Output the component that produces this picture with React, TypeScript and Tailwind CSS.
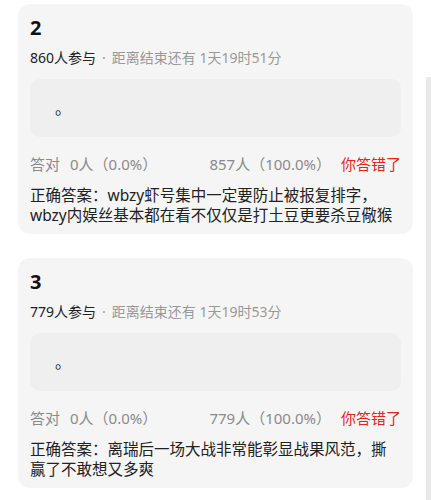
import React from "react";

type Quiz = {
  no: string;
  joined: string;
  remain: string;
  wrongCount: string;
  lines: string[];
};

const quizzes: Quiz[] = [
  {
    no: "2",
    joined: "860人参与",
    remain: "距离结束还有 1天19时51分",
    wrongCount: "857人（100.0%）",
    lines: ["正确答案：wbzy虾号集中一定要防止被报复排字，", "wbzy内娱丝基本都在看不仅仅是打土豆更要杀豆儆猴"],
  },
  {
    no: "3",
    joined: "779人参与",
    remain: "距离结束还有 1天19时53分",
    wrongCount: "779人（100.0%）",
    lines: ["正确答案：离瑞后一场大战非常能彰显战果风范，撕", "赢了不敢想又多爽"],
  },
];

function QuizCard({ q }: { q: Quiz }) {
  return (
    <div className="mx-[18px] mb-6 rounded-[12px] bg-[#f5f5f5] px-3 pt-[10px] pb-[9px]">
      {/* header */}
      <div className="text-[20px] font-bold leading-[28px] text-[#111]">{q.no}</div>
      <div className="mt-[5px] text-[14px] leading-[22px]">
        <span className="text-[#222]">{q.joined}</span>
        <span className="mx-[6px] text-[#999]">·</span>
        <span className="text-[#999]">{q.remain}</span>
      </div>

      {/* option box */}
      <div className="mt-[10px] flex h-[58px] items-center rounded-[10px] bg-[#efefef] px-[25px] text-[16px] leading-[24px] text-[#222]">
        。
      </div>

      {/* stats */}
      <div className="mt-[16px] flex items-center justify-between text-[15px] leading-[22px]">
        <div className="text-[#8a8a8a]">
          答对<span className="ml-[10px]">0人（0.0%）</span>
        </div>
        <div className="flex items-center gap-[10px]">
          <span className="text-[#8a8a8a]">{q.wrongCount}</span>
          <span className="text-[#e5231d]">你答错了</span>
        </div>
      </div>

      {/* answer */}
      <div className="mt-[10px] text-[15.5px] leading-[20px] text-[#222]">
        {q.lines.map((l) => (
          <div key={l} className="whitespace-nowrap">
            {l}
          </div>
        ))}
      </div>
    </div>
  );
}

export default function App() {
  return (
    <div
      className="relative h-[500px] w-[431px] overflow-hidden bg-white pt-[4px]"
      style={{ fontFamily: '"Noto Sans", "Noto Sans CJK SC", sans-serif' }}
    >
      {quizzes.map((q) => (
        <QuizCard key={q.no} q={q} />
      ))}
      {/* scroll indicator */}
      <div className="absolute right-0 top-[77px] bottom-0 w-[5px] bg-[#e9e9e9]" />
    </div>
  );
}
